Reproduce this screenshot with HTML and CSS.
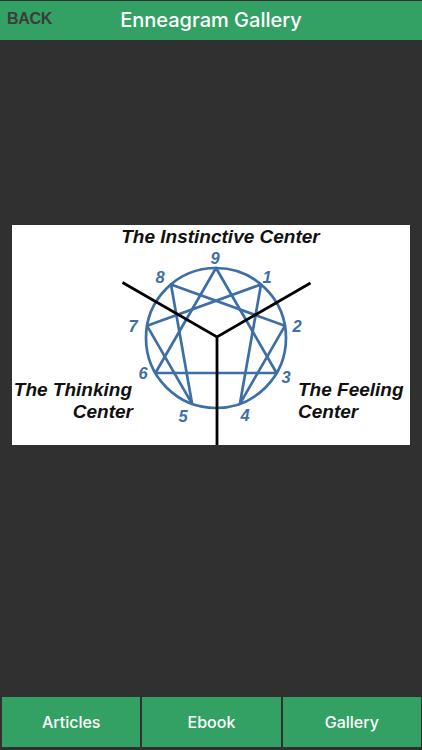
FILE: index.html
```html
<!DOCTYPE html>
<html>
<head>
<meta charset="utf-8">
<link rel="stylesheet" href="styles.css">
</head>
<body>
<div class="app">
  <header class="topbar">
    <span class="back">BACK</span>
    <h1 class="title">Enneagram Gallery</h1>
  </header>
  <main class="content">
    <div class="picture">
      <svg class="diagram" viewBox="0 0 398 220" width="398" height="220">
        <g fill="none" stroke="#3d6fa6" stroke-width="2.7" stroke-linejoin="round">
          <circle cx="204" cy="113" r="70"/>
          <polygon points="204,43 264.6,148 143.4,148"/>
          <polygon points="249,59.4 227.9,178.8 272.9,100.8 159,59.4 180.1,178.8 135.1,100.8"/>
        </g>
        <g fill="none" stroke="#000" stroke-width="2.8">
          <polyline points="110.5,57.5 205,112 298.5,58"/>
          <line x1="205" y1="112" x2="205" y2="220"/>
        </g>
        <g class="label">
          <text x="208.5" y="17.5" text-anchor="middle">The Instinctive Center</text>
          <text x="120" y="171" text-anchor="end">The Thinking</text>
          <text x="121" y="193" text-anchor="end">Center</text>
          <text x="286" y="171">The Feeling</text>
          <text x="286" y="193">Center</text>
        </g>
        <g class="num" text-anchor="middle">
          <text x="203" y="39">9</text>
          <text x="255" y="58">1</text>
          <text x="148" y="58">8</text>
          <text x="121" y="107">7</text>
          <text x="285" y="107">2</text>
          <text x="131" y="154">6</text>
          <text x="274" y="158">3</text>
          <text x="171" y="197">5</text>
          <text x="233" y="196">4</text>
        </g>
      </svg>
    </div>
  </main>
  <nav class="tabs">
    <div class="tab">Articles</div>
    <div class="tab">Ebook</div>
    <div class="tab">Gallery</div>
  </nav>
</div>
</body>
</html>
```
FILE: styles.css
```css
html, body {
  margin: 0;
  padding: 0;
  background: #303030;
}
.app {
  width: 422px;
  height: 750px;
  display: flex;
  flex-direction: column;
  font-family: "Liberation Sans", Arial, sans-serif;
  background: #303030;
}
.topbar {
  margin-top: 1px;
  height: 39px;
  background: #33a164;
  display: flex;
  align-items: center;
  justify-content: center;
  position: relative;
}
.back {
  position: absolute;
  left: 7px;
  top: 9px;
  font-size: 16px;
  font-weight: bold;
  color: #3a3d3b;
  letter-spacing: -0.3px;
}
.title {
  margin: 0 0 1px 0;
  font-family: Inter, "Liberation Sans", sans-serif;
  font-size: 20px;
  font-weight: 500;
  color: #fff;
}
.content {
  flex: 1;
  padding: 185px 0 0 12px;
}
.picture {
  width: 398px;
  height: 220px;
  background: #fff;
}
.diagram {
  display: block;
}
.label text {
  font-family: "Liberation Sans", Arial, sans-serif;
  font-weight: bold;
  font-style: italic;
  font-size: 19px;
  fill: #111;
}
.num text {
  font-family: "Liberation Sans", Arial, sans-serif;
  font-weight: bold;
  font-style: italic;
  font-size: 16.5px;
  fill: #3d6fa6;
}
.tabs {
  height: 50px;
  display: flex;
  gap: 2px;
  padding: 0 1px 3px 2px;
}
.tab {
  flex: 1;
  background: #33a164;
  color: #fff;
  font-family: Inter, "Liberation Sans", sans-serif;
  font-size: 16px;
  font-weight: 500;
  display: flex;
  align-items: center;
  justify-content: center;
}
```
